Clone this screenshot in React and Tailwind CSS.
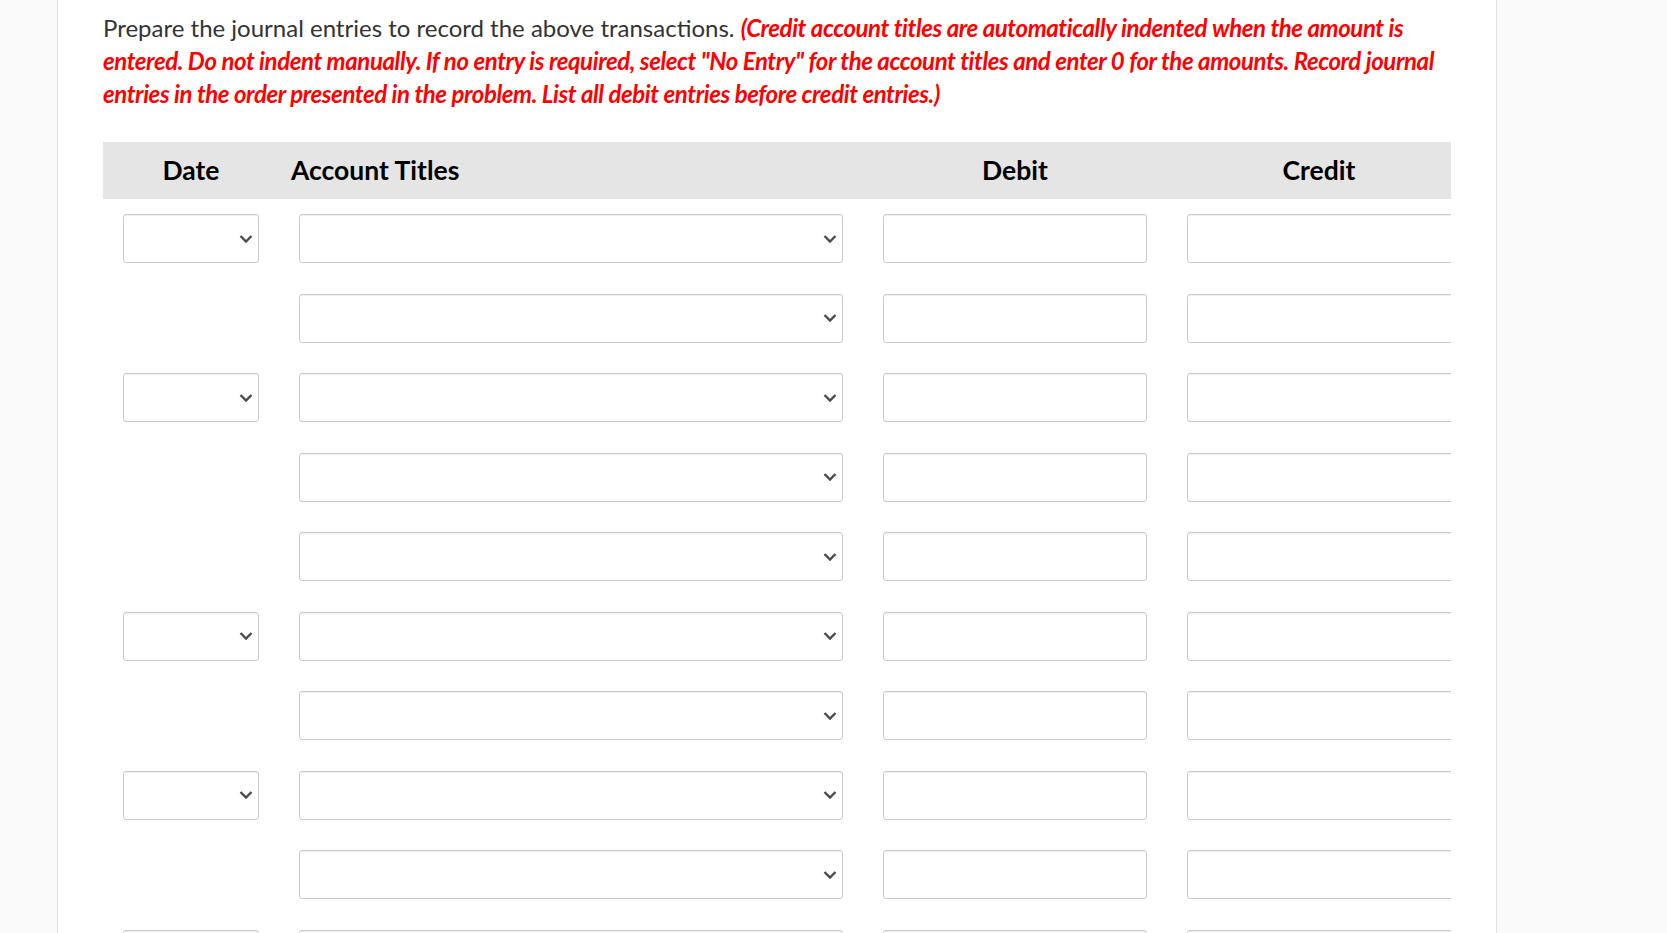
import React from 'react';

const rows = [true, false, true, false, false, true, false, true, false, true];

const Chevron = () => (
  <svg width="14" height="9" viewBox="0 0 14 9" className="absolute right-[5px] top-1/2 -translate-y-1/2">
    <polyline points="1.5,1.5 7,7 12.5,1.5" fill="none" stroke="#4a4a4a" strokeWidth="2.4" />
  </svg>
);

const Select = ({ width }) => (
  <div className={`relative h-[49px] ${width} rounded-[3px] border border-[#c9c9c9] bg-white shadow-[inset_0_1px_1px_rgba(0,0,0,0.06)]`}>
    <Chevron />
  </div>
);

const Input = ({ width }) => (
  <div className={`h-[49px] ${width} shrink-0 rounded-[3px] border border-[#c9c9c9] bg-white shadow-[inset_0_1px_1px_rgba(0,0,0,0.06)]`} />
);

export default function App() {
  return (
    <div className="flex h-[933px] overflow-hidden bg-[#fafafa]" style={{ fontFamily: 'Lato, "Noto Sans", sans-serif' }}>
      <div className="ml-[57px] w-[1440px] shrink-0 border-x border-[#e2e2e2] bg-white pl-[45px] pt-[11px]">
        <p className="w-[1348px] text-[24px] leading-[33px] text-[#333]">
          Prepare the journal entries to record the above transactions.{' '}
          <span className="font-bold italic tracking-[-0.017em] text-[#ff0000]">
            (Credit account titles are automatically indented when the amount is entered. Do not indent manually. If no entry is required, select "No Entry" for the account titles and enter 0 for the amounts. Record journal entries in the order presented in the problem. List all debit entries before credit entries.)
          </span>
        </p>

        <div className="mt-[32px] w-[1348px] overflow-hidden">
          <div className="flex h-[57px] items-center bg-[#e5e5e5] text-[26.5px] font-bold text-black">
            <div className="w-[196px] shrink-0 pl-[20px] text-center">
              <div className="w-[136px]">Date</div>
            </div>
            <div className="w-[584px] shrink-0">
              <span className="-ml-[8px]">Account Titles</span>
            </div>
            <div className="w-[304px] shrink-0 text-center">
              <div className="w-[264px]">Debit</div>
            </div>
            <div className="w-[264px] shrink-0 text-center">Credit</div>
          </div>

          <div className="flex flex-col gap-[30.5px] pt-[15px]">
            {rows.map((hasDate, i) => (
              <div key={i} className="flex items-center">
                <div className="w-[196px] shrink-0 pl-[20px]">
                  {hasDate && <Select width="w-[136px]" />}
                </div>
                <div className="w-[584px] shrink-0">
                  <Select width="w-[544px]" />
                </div>
                <div className="w-[304px] shrink-0">
                  <Input width="w-[264px]" />
                </div>
                <Input width="w-[300px]" />
              </div>
            ))}
          </div>
        </div>
      </div>
    </div>
  );
}
